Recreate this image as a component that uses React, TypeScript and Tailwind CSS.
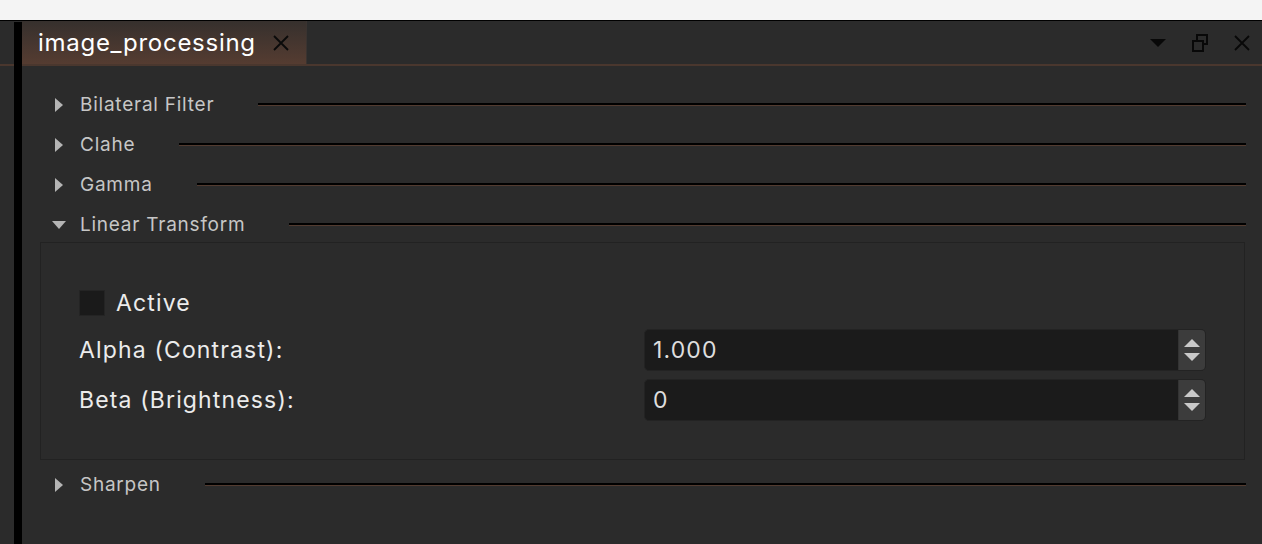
import React from 'react';

const font = { fontFamily: 'Inter, "Noto Sans", sans-serif' };

function Caret({ open }: { open?: boolean }) {
  return open ? (
    <svg width="14" height="8" viewBox="0 0 14 8" className="shrink-0">
      <path d="M0 0 L14 0 L7 8 Z" fill="#b4b4b4" />
    </svg>
  ) : (
    <svg width="8" height="14" viewBox="0 0 8 14" className="shrink-0">
      <path d="M0 0 L8 7 L0 14 Z" fill="#b4b4b4" />
    </svg>
  );
}

function Header({ label, open }: { label: string; open?: boolean }) {
  return (
    <div className="flex items-center h-[40px] pr-[16px] pt-[1px]">
      <div className={open ? 'w-[58px] pl-[30px] flex' : 'w-[58px] pl-[33px] flex'}>
        <Caret open={open} />
      </div>
      <span className="text-[19px] tracking-[0.04em] text-[#c6c6c6] leading-none">{label}</span>
      <div className="flex-1 ml-[44px] h-[3px] border-t-2 border-black bg-[#523b30]" />
    </div>
  );
}

function SpinBox({ value }: { value: string }) {
  return (
    <div className="w-[562px] h-[42px] flex rounded-[5px] bg-[#1b1b1b] border border-[#232323] overflow-hidden">
      <div className="flex-1 flex items-center pl-[8px] text-[23px] tracking-[0.05em] text-[#dedede]">{value}</div>
      <div className="w-[27px] bg-[#3c3c3c] flex flex-col items-center justify-center gap-[6px] border-l border-[#333]">
        <svg width="16" height="8" viewBox="0 0 16 8">
          <path d="M0 8 L8 0 L16 8 Z" fill="#c9c9c9" />
        </svg>
        <svg width="16" height="8" viewBox="0 0 16 8">
          <path d="M0 0 L16 0 L8 8 Z" fill="#c9c9c9" />
        </svg>
      </div>
    </div>
  );
}

export default function App() {
  return (
    <div className="w-[1262px] h-[544px] flex flex-col overflow-hidden bg-[#2b2b2b]" style={font}>
      <div className="h-[21px] bg-[#f4f4f4] border-b border-black shrink-0" />
      <div className="flex-1 flex min-h-0">
        <div className="w-[14px] shrink-0">
          <div className="h-[45px] border-b-2 border-[#4a372e]" />
        </div>
        <div className="w-[8px] bg-black shrink-0 mt-[1px]" />
        <div className="flex-1 flex flex-col">
          <div className="h-[45px] flex items-stretch border-b-2 border-[#4a372e] shrink-0">
            <div className="w-[284px] flex items-center pl-[16px] bg-gradient-to-b from-[#36302d] to-[#553c31]">
              <span className="text-[24px] tracking-[0.03em] text-white leading-none">image_processing</span>
              <svg width="16" height="16" viewBox="0 0 16 16" className="ml-[17px]">
                <path d="M1 1 L15 15 M15 1 L1 15" stroke="#0a0a0a" strokeWidth="1.8" />
              </svg>
            </div>
            <div className="w-[1px] bg-[#3a3330]" />
            <div className="flex-1" />
            <div className="flex items-center pr-[12px]">
              <svg width="16" height="8" viewBox="0 0 16 8" className="mr-[26px]">
                <path d="M0 0 L16 0 L8 8 Z" fill="#080808" />
              </svg>
              <svg width="16" height="18" viewBox="0 0 16 18" className="mr-[26px]">
                <rect x="5" y="1" width="10" height="9" fill="none" stroke="#080808" strokeWidth="2" />
                <rect x="1" y="7" width="10" height="10" fill="#2b2b2b" stroke="#080808" strokeWidth="2" />
              </svg>
              <svg width="16" height="16" viewBox="0 0 16 16">
                <path d="M1 1 L15 15 M15 1 L1 15" stroke="#080808" strokeWidth="1.8" />
              </svg>
            </div>
          </div>

          <div className="pt-[18px]">
            <Header label="Bilateral Filter" />
            <Header label="Clahe" />
            <Header label="Gamma" />
            <div className="h-[38px] overflow-hidden">
              <Header label="Linear Transform" open />
            </div>
            <div className="ml-[18px] mr-[17px] border border-[#222222] pt-[46px] pb-[38px] pl-[38px] pr-[38px] text-[#ececec]">
              <div className="flex items-center h-[28px]">
                <div className="w-[26px] h-[26px] bg-[#1a1a1a] border border-[#242424]" />
                <span className="ml-[11px] text-[23px] tracking-[0.05em] leading-none">Active</span>
              </div>
              <div className="flex items-center mt-[12px]">
                <span className="flex-1 text-[23px] tracking-[0.05em] leading-none">Alpha (Contrast):</span>
                <SpinBox value="1.000" />
              </div>
              <div className="flex items-center mt-[8px]">
                <span className="flex-1 text-[23px] tracking-[0.05em] leading-none">Beta (Brightness):</span>
                <SpinBox value="0" />
              </div>
            </div>
            <div className="mt-[4px]">
              <Header label="Sharpen" />
            </div>
          </div>
        </div>
      </div>
    </div>
  );
}
